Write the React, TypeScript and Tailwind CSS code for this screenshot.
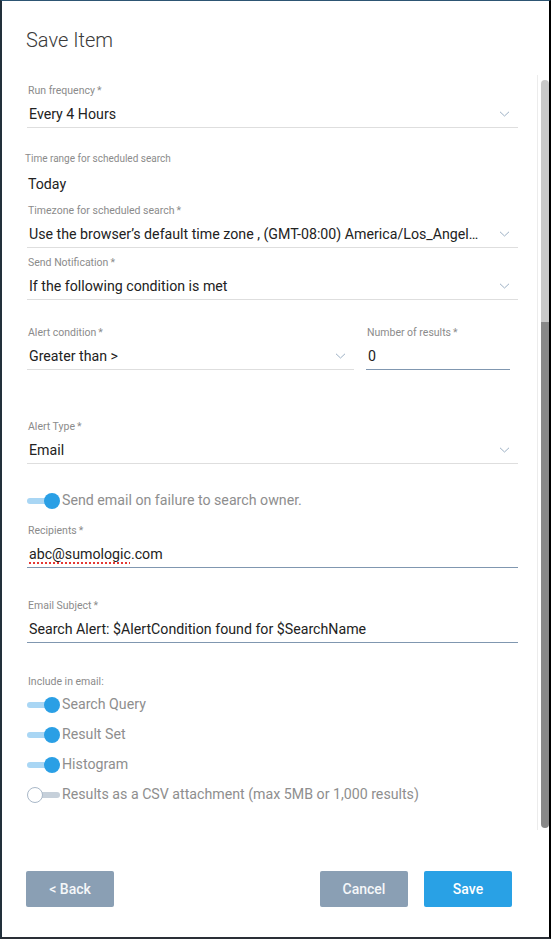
import React from "react";

const Chevron = () => (
  <svg width="11" height="6" viewBox="0 0 11 6" className="shrink-0">
    <path d="M1 0.8 L5.5 5 L10 0.8" fill="none" stroke="#9db0c4" strokeWidth="1" />
  </svg>
);

function Label({ text, star = true }: { text: string; star?: boolean }) {
  return (
    <div className="h-[12px] text-[10.5px] leading-[12px] text-[#8b8b8b] pl-[1px]">
      {text}
      {star && <span className="ml-[2px]">*</span>}
    </div>
  );
}

function SelectField({
  label,
  value,
  className = "",
}: {
  label: string;
  value: string;
  className?: string;
}) {
  return (
    <div className={"min-w-0 " + className}>
      <Label text={label} />
      <div className="flex items-center pt-[8px] pb-[4px] border-b border-[#dedede]">
        <div className="flex-1 min-w-0 truncate text-[14.2px] leading-[18px] text-[#222] pl-[2px]">
          {value}
        </div>
        <div className="shrink-0 pl-[16px] pr-[8px]">
          <Chevron />
        </div>
      </div>
    </div>
  );
}

function Toggle({ on, text }: { on: boolean; text: string }) {
  return (
    <div className="flex items-center h-[30px]">
      <div className="relative w-[33px] h-4 flex items-center">
        {on ? (
          <>
            <div className="h-[6px] w-[26px] rounded-full bg-[#a9d6f4]" />
            <div className="absolute right-0 top-0 size-4 rounded-full bg-[#2a9fe5]" />
          </>
        ) : (
          <>
            <div className="ml-auto h-[6px] w-[26px] rounded-full bg-[#c6d0da]" />
            <div className="absolute left-0 top-0 size-4 rounded-full bg-white border border-[#a9b8c8]" />
          </>
        )}
      </div>
      <span className="ml-[2px] text-[14.2px] text-[#8e8e8e]">{text}</span>
    </div>
  );
}

export default function App() {
  return (
    <div
      className="w-[551px] h-[939px] flex flex-col bg-white border-t border-t-[#2d5573] border-l-2 border-l-[#22303b] border-r-2 border-r-black border-b-2 border-b-[#2a2f36]"
      style={{ fontFamily: "Roboto, 'Liberation Sans', sans-serif" }}
    >
      {/* header */}
      <div className="h-[74px] pl-[24px] pt-[26px]">
        <h1 className="text-[20px] leading-[26px] font-light text-[#3a3a3a]">Save Item</h1>
      </div>

      {/* body */}
      <div className="flex h-[755px]">
        <div className="flex-1 min-w-0 pl-[25px] pr-[19px] pt-[10px]">
          <SelectField label="Run frequency" value="Every 4 Hours" />

          <div className="mt-[25px]">
            <div className="h-[12px] text-[10px] leading-[12px] text-[#8b8b8b] -ml-[2px]">
              Time range for scheduled search
            </div>
            <div className="pt-[10px] text-[14.2px] leading-[18px] text-[#222] pl-[1px]">Today</div>
          </div>

          <SelectField
            className="mt-[12px]"
            label="Timezone for scheduled search"
            value="Use the browser’s default time zone , (GMT-08:00) America/Los_Angeles"
          />
          <SelectField
            className="mt-[9px]"
            label="Send Notification"
            value="If the following condition is met"
          />

          <div className="mt-[27px] flex">
            <SelectField className="w-[327px] shrink-0" label="Alert condition" value="Greater than >" />
            <div className="w-[144px] ml-[12px] shrink-0">
              <Label text="Number of results" />
              <div className="pt-[8px] pb-[4px] border-b border-[#8097b0] text-[14.2px] leading-[18px] text-[#222] pl-[2px]">
                0
              </div>
            </div>
          </div>

          <SelectField className="mt-[51px]" label="Alert Type" value="Email" />

          <div className="mt-[22px]">
            <Toggle on text="Send email on failure to search owner." />
          </div>

          <div className="mt-[9px]">
            <Label text="Recipients" />
            <div className="pt-[8px] pb-[4px] border-b border-[#8097b0] text-[14.2px] leading-[18px] text-[#222] pl-[2px]">
              <span className="underline decoration-dotted decoration-[#e53935] decoration-[1.5px] underline-offset-[3px]">
                abc@sumologic
              </span>
              .com
            </div>
          </div>

          <div className="mt-[32px]">
            <Label text="Email Subject" />
            <div className="pt-[8px] pb-[4px] border-b border-[#8097b0] text-[14.2px] leading-[18px] text-[#222] pl-[2px]">
              Search Alert: $AlertCondition found for $SearchName
            </div>
          </div>

          <div className="mt-[33px]">
            <Label text="Include in email:" star={false} />
            <div className="mt-[2px]">
              <Toggle on text="Search Query" />
              <Toggle on text="Result Set" />
              <Toggle on text="Histogram" />
              <Toggle on={false} text="Results as a CSV attachment (max 5MB or 1,000 results)" />
            </div>
          </div>
        </div>

        {/* scrollbar */}
        <div className="shrink-0 w-[12px] border-l border-[#ececec] pt-[5px] pb-[2px] pl-[3px] flex flex-col">
          <div className="w-[8px] h-[242px] rounded-t-full bg-[#c9c9c9]" />
          <div className="w-[8px] flex-1 rounded-b-full bg-[#888888]" />
        </div>
      </div>

      {/* footer */}
      <div className="flex-1 flex items-start pt-[41px] pl-[24px] pr-[37px]">
        <button className="w-[88px] h-[36px] rounded-[2px] bg-[#8a9fb4] text-[#f5f7f9] text-[14px] font-medium">
          &lt; Back
        </button>
        <div className="flex-1" />
        <button className="w-[88px] h-[36px] rounded-[2px] bg-[#8a9fb4] text-[#f5f7f9] text-[14px] font-medium">
          Cancel
        </button>
        <button className="ml-[16px] w-[88px] h-[36px] rounded-[2px] bg-[#29a1e5] text-white text-[14px] font-medium">
          Save
        </button>
      </div>
    </div>
  );
}
